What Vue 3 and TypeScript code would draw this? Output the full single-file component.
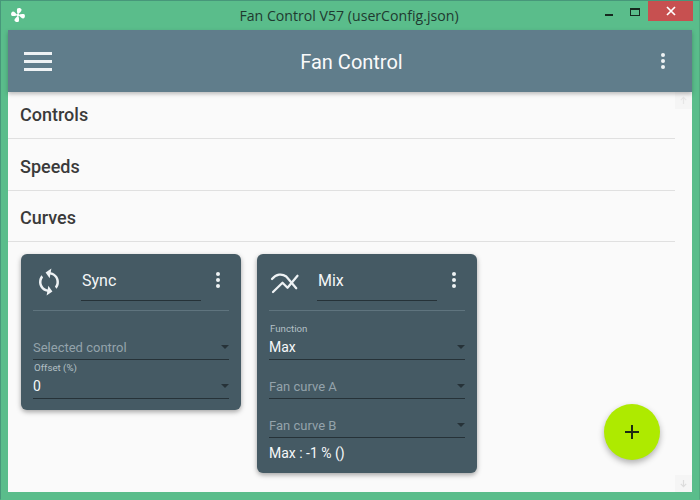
<script setup lang="ts">
interface Field {
  label?: string
  value: string
  placeholder?: boolean
}
interface Card {
  title: string
  icon: 'sync' | 'mix'
  fields: Field[]
  status?: string
}

const sections: string[] = ['Controls', 'Speeds', 'Curves']
const bladeAngles: number[] = [0, 90, 180, 270]

const cards: Card[] = [
  {
    title: 'Sync',
    icon: 'sync',
    fields: [
      { value: 'Selected control', placeholder: true },
      { label: 'Offset (%)', value: '0' }
    ]
  },
  {
    title: 'Mix',
    icon: 'mix',
    fields: [
      { label: 'Function', value: 'Max' },
      { value: 'Fan curve A', placeholder: true },
      { value: 'Fan curve B', placeholder: true }
    ],
    status: 'Max : -1 % ()'
  }
]
</script>

<template>
  <div class="window">
    <div class="titlebar">
      <div class="tb-left">
        <svg class="app-icon" viewBox="0 0 16 16" width="16" height="16">
          <g fill="#fff">
            <circle cx="8" cy="8" r="1.2" />
            <path
              v-for="a in bladeAngles"
              :key="a"
              :transform="`rotate(${a} 8 8)`"
              d="M8 7.6C7 6 6.6 3.6 7.2 1.6 8.6.6 11.2 1 11.6 2.8 11.6 4.6 9.4 5.8 8 7.6Z"
            />
          </g>
        </svg>
      </div>
      <div class="tb-title">Fan Control V57 (userConfig.json)</div>
      <div class="tb-right">
        <div class="cap-btn"><span class="cap-min"></span></div>
        <div class="cap-btn"><span class="cap-max"></span></div>
        <div class="cap-close">
          <svg viewBox="0 0 10 10" width="10" height="10">
            <path d="M1 1L9 9M9 1L1 9" stroke="#fff" stroke-width="1.7" fill="none" />
          </svg>
        </div>
      </div>
    </div>

    <div class="client">
      <header class="appbar">
        <svg class="menu" viewBox="0 0 28 19" width="28" height="19">
          <rect y="0" width="28" height="3" fill="#eef2f4" />
          <rect y="8" width="28" height="3" fill="#eef2f4" />
          <rect y="16" width="28" height="3" fill="#eef2f4" />
        </svg>
        <div class="appbar-title">Fan Control</div>
        <svg class="more" viewBox="0 0 24 24" width="24" height="24">
          <circle cx="12" cy="6" r="2" fill="#eef2f4" />
          <circle cx="12" cy="12" r="2" fill="#eef2f4" />
          <circle cx="12" cy="18" r="2" fill="#eef2f4" />
        </svg>
      </header>

      <div class="main">
        <div class="content">
          <div v-for="s in sections" :key="s" class="section">{{ s }}</div>
          <div class="cards">
            <article v-for="c in cards" :key="c.title" class="card">
              <div class="card-head">
                <svg class="card-icon" viewBox="0 0 24 24" width="30" height="30">
                  <path
                    v-if="c.icon === 'sync'"
                    fill="#eef2f4"
                    transform="rotate(10 12 12)"
                    d="M12 4V1L8 5l4 4V6c3.31 0 6 2.69 6 6 0 1.01-.25 1.97-.7 2.8l1.46 1.46C19.54 15.03 20 13.57 20 12c0-4.42-3.58-8-8-8zm0 14c-3.31 0-6-2.69-6-6 0-1.01.25-1.97.7-2.8L5.24 7.74C4.46 8.97 4 10.43 4 12c0 4.42 3.58 8 8 8v3l4-4-4-4v3z"
                  />
                  <g v-else fill="none" stroke="#eef2f4" stroke-width="1.8" stroke-linecap="round" stroke-linejoin="round">
                    <path d="M1.6 9.6C5 5.6 9.5 5 13 7.6L21 17" />
                    <path d="M2.4 20L10 12.6 14 16.6 22 7" />
                  </g>
                </svg>
                <div class="card-title">{{ c.title }}</div>
                <svg class="card-more" viewBox="0 0 24 24" width="24" height="24">
                  <circle cx="12" cy="6" r="2" fill="#eef2f4" />
                  <circle cx="12" cy="12" r="2" fill="#eef2f4" />
                  <circle cx="12" cy="18" r="2" fill="#eef2f4" />
                </svg>
              </div>
              <div class="fields">
                <div v-for="f in c.fields" :key="f.value" class="field">
                  <div v-if="f.label" class="field-label">{{ f.label }}</div>
                  <div class="field-row">
                    <span :class="f.placeholder ? 'ph' : 'val'">{{ f.value }}</span>
                    <span class="caret"></span>
                  </div>
                </div>
              </div>
              <div v-if="c.status" class="status">{{ c.status }}</div>
            </article>
          </div>
        </div>
        <div class="scrollbar">
          <div class="sb-btn">
            <svg viewBox="0 0 10 10" width="9" height="9">
              <path d="M5 9V1.5M2 4.5L5 1.5 8 4.5" stroke="#e6e6e6" stroke-width="1.3" fill="none" />
            </svg>
          </div>
          <div class="sb-btn">
            <svg viewBox="0 0 10 10" width="9" height="9">
              <path d="M5 1V8.5M2 5.5L5 8.5 8 5.5" stroke="#dcdcdc" stroke-width="1.3" fill="none" />
            </svg>
          </div>
        </div>
      </div>

      <button class="fab" type="button">
        <svg viewBox="0 0 14 14" width="14" height="14">
          <path d="M7 0V14M0 7H14" stroke="#1c2a12" stroke-width="2" fill="none" />
        </svg>
      </button>
    </div>
  </div>
</template>

<style>
html,
body {
  margin: 0;
  padding: 0;
}
</style>

<style scoped>
.window {
  box-sizing: border-box;
  width: 700px;
  height: 500px;
  display: flex;
  flex-direction: column;
  background: #5abd8b;
  border: 1px solid #47977a;
  border-bottom-color: #5abd8b;
  border-right-color: #52ab80;
  font-family: Roboto, sans-serif;
  overflow: hidden;
}
.titlebar {
  height: 29px;
  flex: none;
  display: grid;
  grid-template-columns: 1fr auto 1fr;
}
.tb-left {
  display: flex;
  align-items: flex-start;
  padding: 6px 0 0 9px;
}
.tb-title {
  margin-left: -2px;
  font-family: "Open Sans", sans-serif;
  font-size: 14.15px;
  line-height: 29px;
  color: #1f3a30;
  white-space: nowrap;
}
.tb-right {
  display: flex;
  justify-content: flex-end;
  align-items: flex-start;
  padding-right: 6px;
}
.cap-btn {
  width: 26px;
  height: 20px;
  display: flex;
  align-items: center;
  justify-content: center;
}
.cap-min {
  display: block;
  width: 8px;
  height: 2px;
  margin-top: 7px;
  background: #16291f;
}
.cap-max {
  display: block;
  box-sizing: border-box;
  width: 10px;
  height: 8px;
  margin-top: 2px;
  border: 1px solid #16291f;
  border-top-width: 2px;
}
.cap-close {
  width: 45px;
  height: 20px;
  display: flex;
  align-items: center;
  justify-content: center;
  background: #c75050;
}
.client {
  position: relative;
  flex: 1;
  min-height: 0;
  margin: 0 7px 7px;
  display: flex;
  flex-direction: column;
  background: #fafafa;
}
.appbar {
  position: relative;
  z-index: 1;
  height: 62px;
  flex: none;
  display: flex;
  align-items: center;
  justify-content: space-between;
  padding: 0 17px 0 16px;
  background: #607d8b;
  box-shadow: 0 2px 4px rgba(0, 0, 0, 0.25);
}
.menu {
  margin-top: 1px;
}
.appbar-title {
  position: absolute;
  left: 3px;
  right: 0;
  top: 17px;
  line-height: 30px;
  text-align: center;
  font-size: 20px;
  font-weight: 400;
  color: #fafafa;
  pointer-events: none;
}
.main {
  flex: 1;
  min-height: 0;
  display: flex;
}
.content {
  flex: 1;
  min-width: 0;
}
.section {
  box-sizing: border-box;
  height: 52px;
  padding: 10px 0 0 12px;
  line-height: 36px;
  font-size: 18px;
  font-weight: 500;
  color: #3a3a3a;
  border-bottom: 1px solid #e0e0e0;
}
.section:nth-child(1) {
  height: 47px;
  padding-top: 5px;
}
.section:nth-child(3) {
  height: 51px;
  padding-top: 9px;
}
.cards {
  display: flex;
  align-items: flex-start;
  gap: 16px;
  padding: 12px 0 0 13px;
}
.card {
  box-sizing: border-box;
  width: 220px;
  padding: 12px 12px 8px;
  border-radius: 6px;
  background: #455a64;
  color: #fff;
  box-shadow: 0 2px 5px rgba(0, 0, 0, 0.35);
}
.card-head {
  display: flex;
  align-items: flex-start;
  height: 44px;
  border-bottom: 1px solid #5f747e;
}
.card-icon {
  flex: none;
  margin: 1px 0 0 1px;
}
.card-title {
  box-sizing: border-box;
  flex: none;
  width: 120px;
  height: 35px;
  margin-left: 17px;
  padding-left: 1px;
  line-height: 30px;
  font-size: 16px;
  color: #f4f6f7;
  border-bottom: 1px solid #263238;
}
.card-more {
  flex: none;
  margin: 2px -1px 0 5px;
}
.fields {
  margin: 10px 0 3px;
}
.field {
  box-sizing: border-box;
  height: 39px;
  display: flex;
  flex-direction: column;
  justify-content: flex-end;
  border-bottom: 1px solid #263238;
}
.field-label {
  height: 12px;
  line-height: 12px;
  margin-left: 1px;
  font-size: 9.7px;
  color: #b4c0c6;
}
.field-row {
  height: 24px;
  display: flex;
  align-items: center;
  justify-content: space-between;
  font-size: 13px;
}
.ph {
  color: #94a3ab;
}
.val {
  font-size: 14px;
  color: #f6f8f9;
}
.caret {
  width: 0;
  height: 0;
  border-left: 4px solid transparent;
  border-right: 4px solid transparent;
  border-top: 4px solid #263238;
}
.status {
  margin: 3px 0 0;
  line-height: 24px;
  font-size: 14px;
  color: #f6f8f9;
}
.scrollbar {
  flex: none;
  width: 17px;
  display: flex;
  flex-direction: column;
  justify-content: space-between;
}
.sb-btn {
  height: 17px;
  display: flex;
  align-items: center;
  justify-content: center;
  background: #f5f5f5;
}
.fab {
  position: absolute;
  left: 596px;
  top: 374px;
  width: 56px;
  height: 56px;
  padding: 0;
  border: none;
  border-radius: 50%;
  display: flex;
  align-items: center;
  justify-content: center;
  background: #aeea00;
  box-shadow: 0 3px 6px rgba(0, 0, 0, 0.3);
}
</style>
